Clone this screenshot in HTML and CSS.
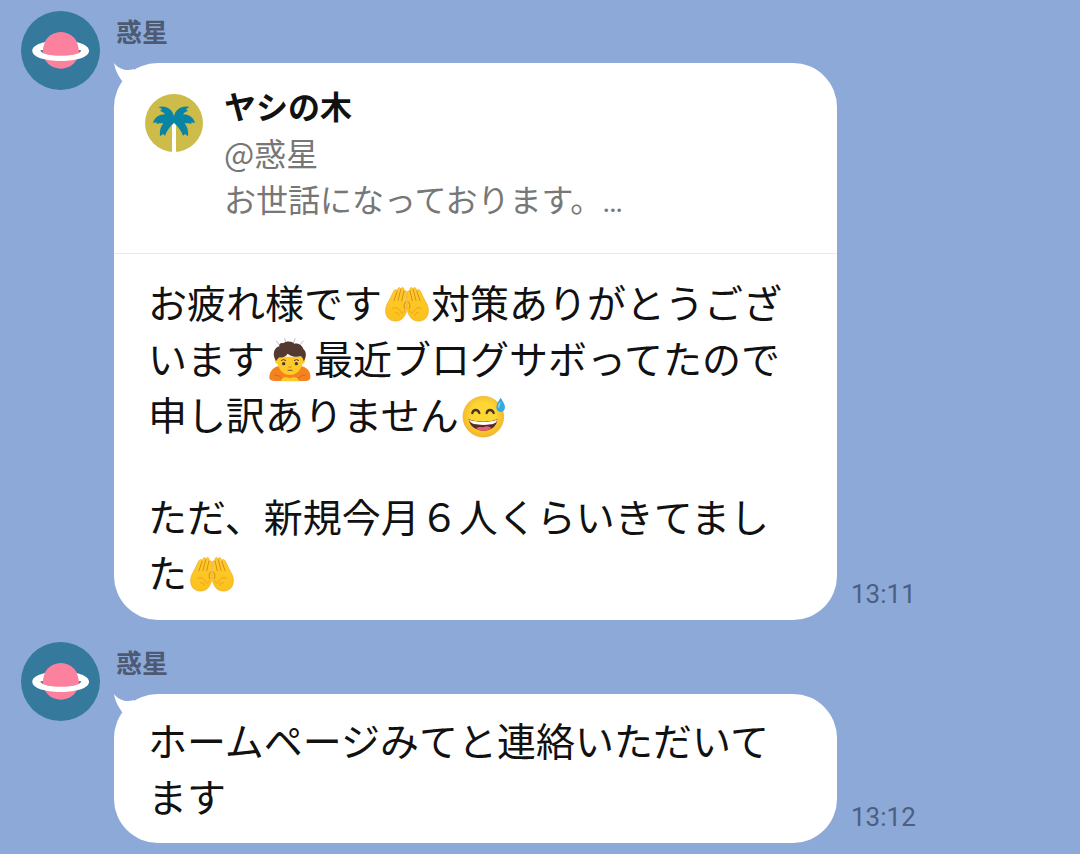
FILE: index.html
```html
<!DOCTYPE html>
<html lang="ja">
<head>
    <meta charset="UTF-8">
    <meta name="viewport" content="width=device-width, initial-scale=1.0">
    <title>惑星</title>
    <link rel="stylesheet" href="styles.css">
</head>
<body>
    <!-- Shared drawings -->
    <svg class="sprite" aria-hidden="true">
        <defs>
            <radialGradient id="faceFill" cx="50%" cy="45%" r="55%">
                <stop offset="0.5" stop-color="#fdd835"/>
                <stop offset="1" stop-color="#f4b62c"/>
            </radialGradient>
            <linearGradient id="handFill" x1="0" y1="0" x2="0" y2="1">
                <stop offset="0" stop-color="#fdcb2e"/>
                <stop offset="1" stop-color="#fcc21b"/>
            </linearGradient>
        </defs>

        <symbol id="planet" viewBox="0 0 238 238">
            <circle cx="119" cy="119" r="119" fill="#35799d"/>
            <circle cx="120" cy="119" r="55" fill="#fb819e"/>
            <path fill="#fff" fill-rule="evenodd" d="M34 120C34 102 70 89 120 89S205 102 205 120S170 151 120 151S34 138 34 120ZM58 119C64 131 88 134 120 134S176 131 182 119C176 115 64 115 58 119Z"/>
            <path fill="#fb819e" d="M66 124C65 90 88 64 120 64S175 90 174 124C160 133 142 134 120 134S80 133 66 124Z"/>
        </symbol>

        <symbol id="palm" viewBox="0 0 174 174">
            <circle cx="87" cy="87" r="87" fill="#cdbb4a"/>
            <path fill="#fff" d="M81 92L87 86L93 92V174H81Z"/>
            <path fill="#0a84a5" d="M87 67C83 45 62 33 40 39L51 45L45 51C52 53 57 56 60 61C43 61 28 71 24 87L35 85V90C42 88 48 88 55 88C47 98 43 110 45 127L54 120L60 125C66 109 74 99 81 92L87 86L93 92C100 99 108 109 114 125L120 120L129 127C131 110 127 98 119 88C126 88 132 88 139 90V85L150 87C146 71 131 61 114 61C117 56 122 53 129 51L123 45L134 39C112 33 91 45 87 67Z"/>
        </symbol>

        <symbol id="palms-up" viewBox="0 0 132 132">
            <g id="palm-hand">
                <path fill="url(#handFill)" stroke="#efa71f" stroke-width="2" stroke-linejoin="round" d="M11 58C17 47 21 36 27 26C31 20 37 22 36 29L39 20C42 14 48 17 47 24L49 19C52 14 58 17 57 24L58 28C61 24 65 27 65 33L64 59C66 67 66 79 63 92C57 107 49 116 34 117C15 119 2 105 2 87C2 75 5 68 11 58Z"/>
                <path fill="none" stroke="#dc8d13" stroke-width="3" stroke-linecap="round" d="M36 29L27 56M47 24L39 55M57 27L50 56M63 59C57 64 55 72 59 80"/>
                <path fill="none" stroke="#eda51b" stroke-width="3" stroke-linecap="round" d="M22 79C32 74 41 79 46 88C49 95 55 94 59 86M31 93C37 90 42 93 42 100"/>
            </g>
            <use href="#palm-hand" transform="matrix(-1 0 0 1 132 0)"/>
        </symbol>

        <symbol id="bowing" viewBox="0 0 132 132">
            <path fill="none" stroke="#9a9a9a" stroke-width="2" stroke-linecap="round" d="M25 9L34 20M50 2L54 14M81 2L77 14M106 9L96 20"/>
            <path fill="#f4821f" d="M4 120C3 101 17 85 36 84H97C116 86 129 101 127 119C126 127 117 129 108 129H24C13 129 5 127 4 120Z"/>
            <path fill="#ffca28" d="M29 56C18 56 18 76 29 78C34 98 48 111 66 111C84 111 98 98 103 78C114 76 114 56 102 56Z"/>
            <path fill="#543930" d="M24 69C12 50 17 30 34 25C32 18 39 13 45 16C57 8 72 10 79 17C91 14 103 22 106 33C117 43 115 58 107 70C105 60 103 58 98 55C83 59 67 54 59 47C55 55 45 59 35 58C31 60 28 64 24 69Z"/>
            <path fill="#ffca28" d="M38 130C40 119 52 114 66 121C80 114 91 119 94 130Z"/>
            <path fill="none" stroke="#dc681a" stroke-width="3" stroke-linecap="round" d="M20 112C32 111 37 115 41 122M111 112C101 111 95 115 91 122"/>
            <path fill="none" stroke="#5b4034" stroke-width="3" stroke-linecap="round" d="M40 67Q46 62 53 67M79 67Q86 62 92 67"/>
            <circle cx="47" cy="77" r="5" fill="#49362e"/>
            <circle cx="85" cy="77" r="5" fill="#49362e"/>
            <path fill="none" stroke="#c9871b" stroke-width="3" stroke-linecap="round" d="M62 87Q66 90 70 87"/>
            <path fill="none" stroke="#795548" stroke-width="3" stroke-linecap="round" d="M60 97Q66 96 72 97"/>
        </symbol>

        <symbol id="sweat-smile" viewBox="0 0 132 132">
            <circle cx="64" cy="68" r="61" fill="url(#faceFill)" stroke="#eea927" stroke-width="2"/>
            <path fill="none" stroke="#493126" stroke-width="7" stroke-linecap="round" d="M31 57C34 45 48 45 52 57M74 57C77 45 91 45 95 57"/>
            <path fill="#562b25" d="M20 76C43 85 86 85 106 76C104 97 89 110 65 110S23 97 20 76Z"/>
            <path fill="#fff" d="M21 77C44 85 85 85 105 77C104 86 96 90 86 91C70 94 59 94 43 91C32 90 24 86 21 77Z"/>
            <path fill="#ed5b78" d="M43 104C50 96 59 101 65 99C74 95 83 97 88 103C75 112 55 112 43 104Z"/>
            <path fill="#37a9df" d="M116 11C121 20 129 31 129 39C129 49 123 54 116 54S103 49 103 40C103 31 110 20 116 11Z"/>
            <path fill="none" stroke="#9bdcf7" stroke-width="4" stroke-linecap="round" d="M110 39C110 35 112 30 114 27"/>
        </symbol>
    </svg>

    <main class="chat">
        <article class="message">
            <svg class="avatar" role="img" aria-label="惑星"><use href="#planet"/></svg>
            <div class="message-main">
                <h2 class="sender">惑星</h2>
                <div class="bubble-row">
                    <div class="bubble">
                        <svg class="tail" viewBox="0 0 24 24" aria-hidden="true"><path d="M0 0C4 5 11 9 20 6L24 24L8 18C4 12 1 7 0 0Z"/></svg>
                        <div class="reply">
                            <svg class="reply-avatar" role="img" aria-label="ヤシの木"><use href="#palm"/></svg>
                            <div class="reply-body">
                                <h3 class="reply-name">ヤシの木</h3>
                                <p class="reply-text">@惑星<br>お世話になっております。<span class="dots">…</span></p>
                            </div>
                        </div>
                        <div class="text">
                            <p>お疲れ様です<svg class="emoji" role="img" aria-label="手のひら"><use href="#palms-up"/></svg>対策ありがとうございます<svg class="emoji" role="img" aria-label="お辞儀"><use href="#bowing"/></svg>最近ブログサボってたので申し訳ありません<svg class="emoji" role="img" aria-label="冷や汗"><use href="#sweat-smile"/></svg></p>
                            <p>ただ、新規今月６人くらいきてました<svg class="emoji" role="img" aria-label="手のひら"><use href="#palms-up"/></svg></p>
                        </div>
                    </div>
                    <time class="time">13:11</time>
                </div>
            </div>
        </article>

        <article class="message">
            <svg class="avatar" role="img" aria-label="惑星"><use href="#planet"/></svg>
            <div class="message-main">
                <h2 class="sender">惑星</h2>
                <div class="bubble-row">
                    <div class="bubble">
                        <svg class="tail" viewBox="0 0 24 24" aria-hidden="true"><path d="M0 0C4 5 11 9 20 6L24 24L8 18C4 12 1 7 0 0Z"/></svg>
                        <div class="text">
                            <p>ホームページみてと連絡いただいてます</p>
                        </div>
                    </div>
                    <time class="time">13:12</time>
                </div>
            </div>
        </article>
    </main>
</body>
</html>
```
FILE: styles.css
```css
* {
    margin: 0;
    padding: 0;
    box-sizing: border-box;
}

body {
    font-family: "Noto Sans CJK JP", sans-serif;
    color: #111;
    background: #8da9d8;
}

.sprite {
    position: absolute;
    width: 0;
    height: 0;
}

.chat {
    display: flex;
    flex-direction: column;
    gap: 22px;
    padding: 11px 21px;
}

.message {
    display: flex;
    gap: 14px;
}

.avatar {
    flex: none;
    width: 79px;
    height: 79px;
}

.message-main {
    flex: 1;
    min-width: 0;
}

.sender {
    height: 52px;
    padding-left: 2px;
    font-size: 26px;
    font-weight: 700;
    line-height: 40px;
    color: #4c5a74;
}

.bubble-row {
    display: flex;
    align-items: flex-end;
    gap: 14px;
}

.bubble {
    position: relative;
    flex: 0 1 723px;
    min-width: 0;
    background: #fff;
    border-radius: 44px;
}

.tail {
    position: absolute;
    top: 0;
    left: 0;
    width: 24px;
    height: 24px;
    fill: #fff;
}

.reply {
    display: flex;
    gap: 21px;
    padding: 18px 31px 32px;
    border-bottom: 1px solid #ebebeb;
}

.reply-avatar {
    flex: none;
    width: 58px;
    height: 58px;
    margin-top: 13px;
}

.reply-name {
    font-size: 32px;
    font-weight: 700;
    line-height: 48px;
}

.reply-text {
    font-size: 32px;
    line-height: 46px;
    color: #777;
}

.dots {
    font-family: Roboto, sans-serif;
    font-size: 31px;
    line-height: 1;
}

.text {
    padding: 17px 34px 20px;
    font-size: 39px;
    line-height: 56px;
}

.reply + .text {
    padding-top: 19px;
    padding-bottom: 21px;
}

.text p + p {
    margin-top: 46px;
}

.emoji {
    width: 44px;
    height: 44px;
    margin: 0 2px 0 3px;
    vertical-align: -8px;
}

.time {
    margin-bottom: 10px;
    font-family: Roboto, sans-serif;
    font-size: 26px;
    line-height: 32px;
    color: #4c5f80;
}
```
